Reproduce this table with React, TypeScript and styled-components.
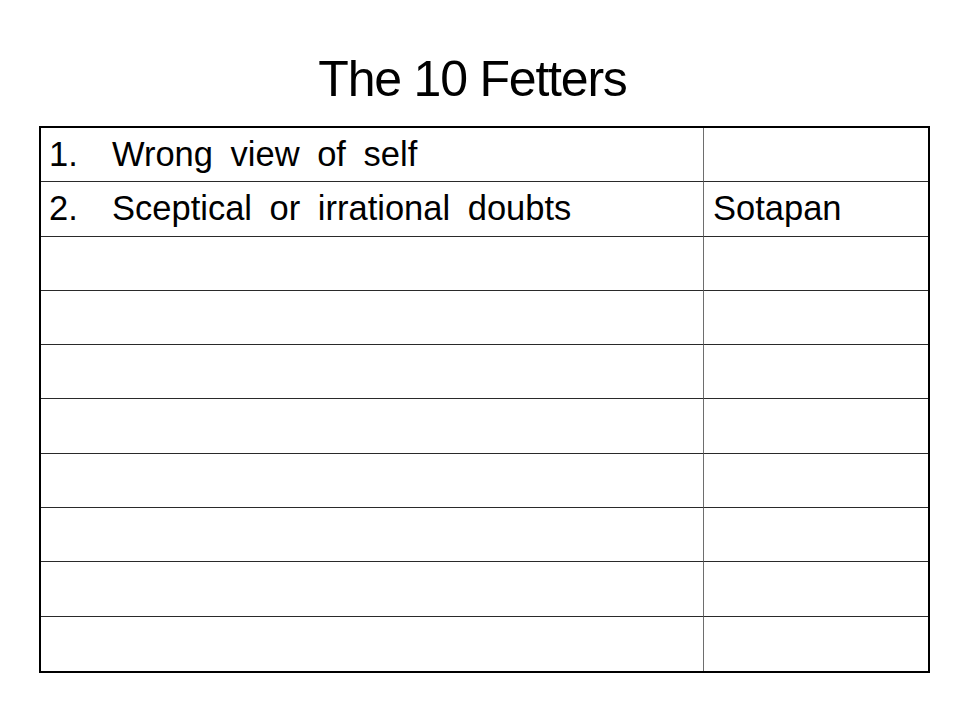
import React from "react";
import styled, { createGlobalStyle } from "styled-components";

const GlobalStyle = createGlobalStyle`
  html, body {
    margin: 0;
    padding: 0;
    background: #ffffff;
  }
  body {
    font-family: "Liberation Sans", Arial, sans-serif;
    color: #000000;
  }
`;

const Slide = styled.div`
  width: 960px;
  height: 720px;
  box-sizing: border-box;
  padding: 50px 30px 0 39px;
  display: flex;
  flex-direction: column;
  background: #ffffff;
`;

const Title = styled.h1`
  margin: 0 0 17px 0;
  height: 59px;
  font-family: "Liberation Sans", Arial, sans-serif;
  font-weight: 400;
  font-size: 50px;
  line-height: 59px;
  letter-spacing: -1.2px;
  text-align: center;
  padding-right: 24px;
  color: #000;
`;

const Table = styled.div`
  width: 891px;
  height: 547px;
  box-sizing: border-box;
  border: 2.5px solid #000;
  display: grid;
  grid-template-columns: 663px 1fr;
  grid-template-rows: repeat(10, 1fr);
`;

const Cell = styled.div<{ $last?: boolean; $right?: boolean }>`
  box-sizing: border-box;
  display: flex;
  align-items: center;
  border-bottom: ${(p) => (p.$last ? "none" : "1.5px solid #2a2a2a")};
  border-right: ${(p) => (p.$right ? "none" : "1.5px solid #6e6e6e")};
  padding: 0 0 0 ${(p) => (p.$right ? "9px" : "8px")};
  font-family: "Liberation Sans", Arial, sans-serif;
  font-size: 34.5px;
  word-spacing: 8px;
  color: #000;
  white-space: nowrap;
`;

const Num = styled.span`
  display: inline-block;
  width: 63px;
  word-spacing: 0;
`;

type Row = { num?: string; text?: string; right?: string };

const rows: Row[] = [
  { num: "1.", text: "Wrong view of self" },
  { num: "2.", text: "Sceptical or irrational doubts", right: "Sotapan" },
  {},
  {},
  {},
  {},
  {},
  {},
  {},
  {},
];

export default function App() {
  return (
    <>
      <GlobalStyle />
      <Slide>
        <Title>The 10 Fetters</Title>
        <Table>
          {rows.map((r, i) => {
            const last = i === rows.length - 1;
            return (
              <React.Fragment key={i}>
                <Cell $last={last}>
                  {r.num && <Num>{r.num}</Num>}
                  {r.text}
                </Cell>
                <Cell $last={last} $right>
                  {r.right}
                </Cell>
              </React.Fragment>
            );
          })}
        </Table>
      </Slide>
    </>
  );
}
